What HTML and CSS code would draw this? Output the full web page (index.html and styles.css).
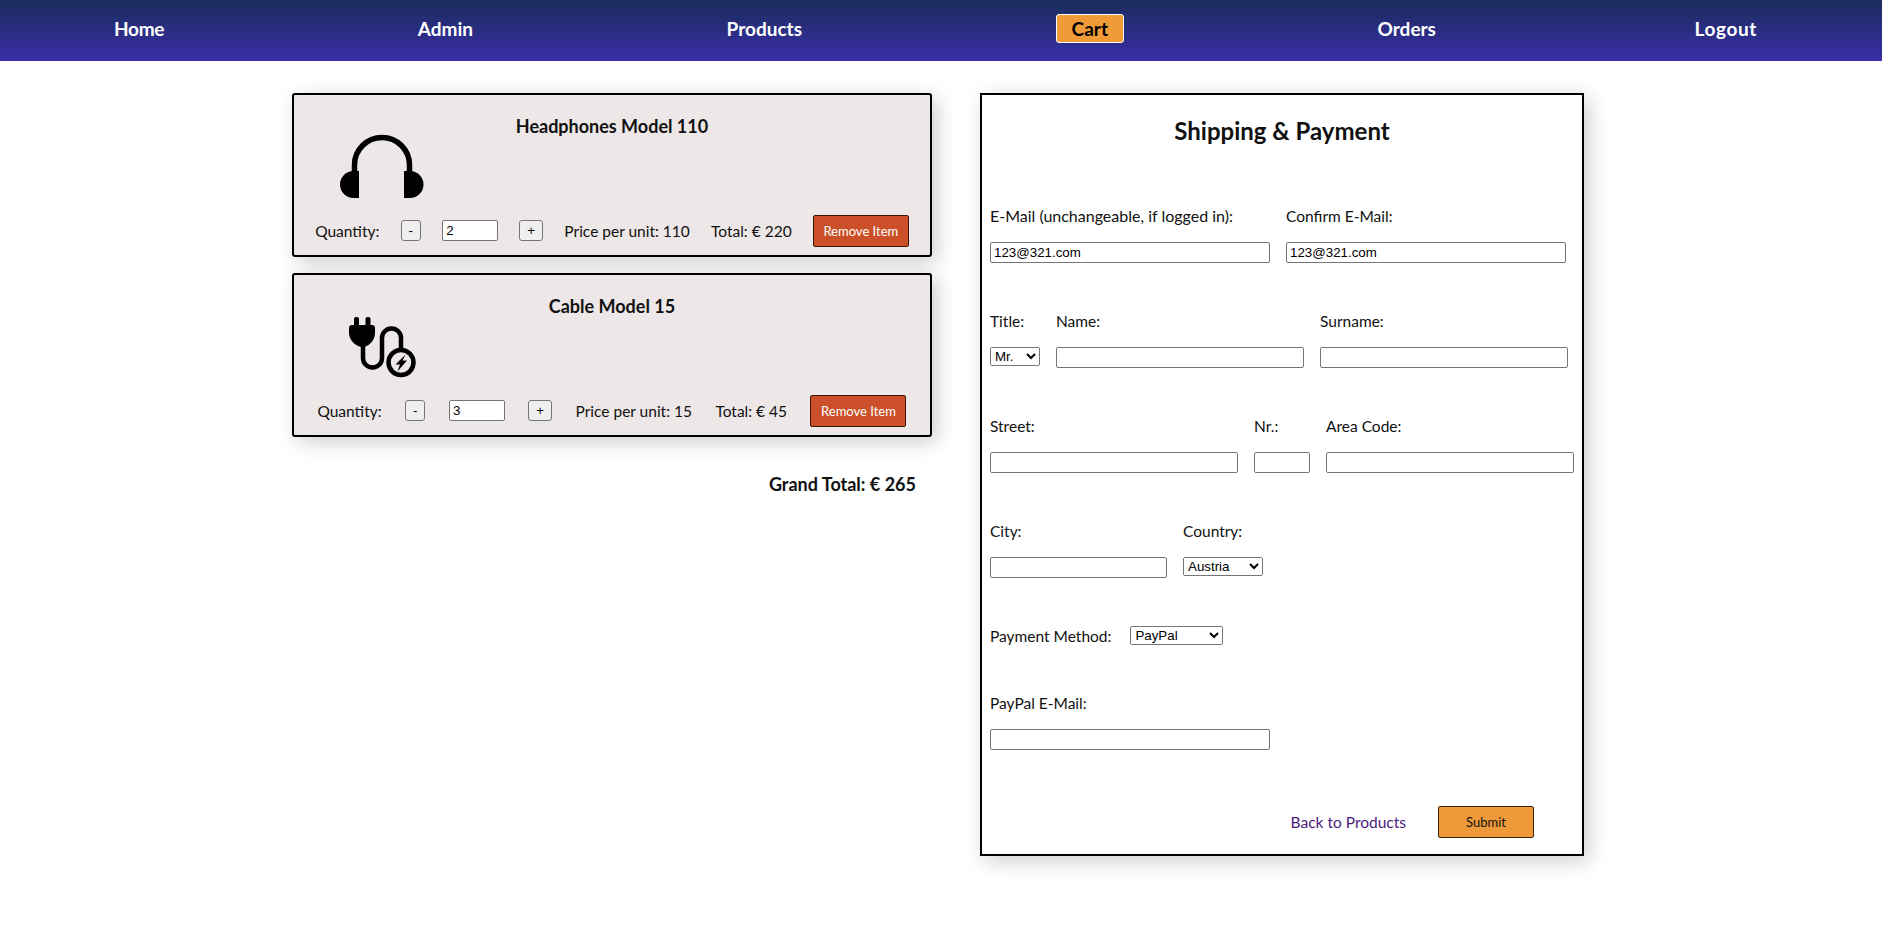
FILE: index.html
```html
<!DOCTYPE html>
<html lang="en">
<head>
    <meta charset="UTF-8">
    <meta name="viewport" content="width=device-width, initial-scale=1.0">
    <title>Cart</title>
    <link rel="stylesheet" href="styles.css">
</head>
<body>
    <nav class="topnav">
        <a href="#">Home</a>
        <a href="#">Admin</a>
        <a href="#">Products</a>
        <a href="#" class="active">Cart</a>
        <a href="#">Orders</a>
        <a href="#">Logout</a>
    </nav>
    <main class="page">
        <section class="cart">
            <article class="item">
                <div class="item-top">
                    <svg class="item-icon" viewBox="-8 -7 100 80" aria-hidden="true">
                        <path class="line thick" d="M16.5 42V33A27.5 27.5 0 0 1 71.5 33V42"/>
                        <path d="M21 39V66H15.5A13.5 13.5 0 0 1 15.5 39Z"/>
                        <path d="M66 39V66H72A13.5 13.5 0 0 0 72 39Z"/>
                    </svg>
                    <h3>Headphones Model 110</h3>
                </div>
                <div class="item-row">
                    <span>Quantity:</span>
                    <button type="button" class="qty">-</button>
                    <input type="text" class="qty-input" value="2">
                    <button type="button" class="qty">+</button>
                    <span>Price per unit: 110</span>
                    <span>Total: € 220</span>
                    <button type="button" class="remove">Remove Item</button>
                </div>
            </article>
            <article class="item">
                <div class="item-top">
                    <svg class="item-icon" viewBox="0 0 100 80" aria-hidden="true">
                        <rect x="24" y="12" width="5" height="10" rx="2"/>
                        <rect x="35.5" y="12" width="5" height="10" rx="2"/>
                        <path d="M22 20H42Q45 20 45 23V28C45 36 38 42 32.5 42C27 42 19 36 19 28V23Q19 20 22 20Z"/>
                        <path class="line" d="M33 40V53A9.5 9.5 0 0 0 52 53V33A9.5 9.5 0 0 1 71 33V46"/>
                        <circle class="line" cx="71" cy="57.5" r="12.5"/>
                        <polygon points="75.5,49.5 65.5,59.5 70,59.5 67.5,66.5 77,55.5 72.5,55.5"/>
                    </svg>
                    <h3>Cable Model 15</h3>
                </div>
                <div class="item-row">
                    <span>Quantity:</span>
                    <button type="button" class="qty">-</button>
                    <input type="text" class="qty-input" value="3">
                    <button type="button" class="qty">+</button>
                    <span>Price per unit: 15</span>
                    <span>Total: € 45</span>
                    <button type="button" class="remove">Remove Item</button>
                </div>
            </article>
            <p class="grand-total">Grand Total: € 265</p>
        </section>
        <form class="checkout">
            <h2>Shipping &amp; Payment</h2>
            <div class="form-row">
                <div class="field"><label class="long-label">E-Mail (unchangeable, if logged in):</label><input type="text" class="w-280" value="123@321.com"></div>
                <div class="field"><label>Confirm E-Mail:</label><input type="text" class="w-280" value="123@321.com"></div>
            </div>
            <div class="form-row">
                <div class="field"><label>Title:</label><select class="w-50"><option>Mr.</option><option>Ms.</option></select></div>
                <div class="field"><label>Name:</label><input type="text" class="w-248"></div>
                <div class="field"><label>Surname:</label><input type="text" class="w-248"></div>
            </div>
            <div class="form-row">
                <div class="field"><label>Street:</label><input type="text" class="w-248"></div>
                <div class="field"><label>Nr.:</label><input type="text" class="w-56"></div>
                <div class="field"><label>Area Code:</label><input type="text" class="w-248"></div>
            </div>
            <div class="form-row">
                <div class="field"><label>City:</label><input type="text" class="w-177"></div>
                <div class="field"><label>Country:</label><select class="w-80"><option>Austria</option><option>Germany</option></select></div>
            </div>
            <div class="form-row inline">
                <label>Payment Method:</label>
                <select class="w-93"><option>PayPal</option><option>Invoice</option></select>
            </div>
            <div class="form-row">
                <div class="field"><label>PayPal E-Mail:</label><input type="text" class="w-280"></div>
            </div>
            <div class="form-actions">
                <a href="#">Back to Products</a>
                <button type="submit" class="submit">Submit</button>
            </div>
        </form>
    </main>
</body>
</html>
```

FILE: styles.css
```css
body {
    font-family: 'Lato', 'Noto Sans', sans-serif;
    font-size: 15.5px;
    color: #111;
    background-color: #fff;
    margin: 0;
    padding: 0;
}

.topnav {
    box-sizing: border-box;
    display: flex;
    justify-content: space-between;
    align-items: center;
    height: 61px;
    padding: 0 125px 4px 114px;
    background: linear-gradient(#1a2d5c, #3a2ea8);
}

.topnav a {
    color: #fff;
    font-size: 19px;
    font-weight: bold;
    text-decoration: none;
}

.topnav a:first-child {
    letter-spacing: -0.3px;
}

.topnav a:last-child {
    letter-spacing: 0.6px;
    margin-left: 5px;
}

.topnav .active {
    background-color: #f09a38;
    color: #000;
    border: 1px solid #fff;
    border-radius: 3px;
    padding: 2px 15px;
}

.page {
    display: flex;
    align-items: flex-start;
    gap: 48px;
    padding: 32px 0 40px 292px;
}

.cart {
    width: 640px;
}

.item {
    box-sizing: border-box;
    height: 164px;
    margin-bottom: 16px;
    background-color: #ede7e7;
    border: 2px solid #000;
    border-radius: 3px;
    box-shadow: 5px 5px 20px rgba(0, 0, 0, 0.2);
}

.item-top {
    display: grid;
    grid-template-columns: 1fr auto 1fr;
    height: 120px;
}

.item-icon {
    display: block;
    width: 100px;
    height: 80px;
    margin: 30px 0 0 36px;
}

.item-icon .line {
    fill: none;
    stroke: #000;
    stroke-width: 4.5;
}

.item-icon .thick {
    stroke-width: 5.5;
}

h3 {
    margin: 19px 0 0;
    font-size: 18px;
    line-height: 24px;
}

.item-row {
    display: flex;
    justify-content: space-evenly;
    align-items: center;
    height: 32px;
    padding-bottom: 1px;
    box-sizing: border-box;
}

.qty {
    font-family: 'Liberation Sans', sans-serif;
    font-size: 13.33px;
    padding: 1px 7px;
    height: 21px;
    background-color: #efefef;
    border: 1px solid #767676;
    border-radius: 3px;
}

.qty-input {
    box-sizing: border-box;
    width: 56px;
}

.remove {
    font-family: inherit;
    font-size: 13px;
    width: 96px;
    height: 32px;
    margin-top: 1px;
    background-color: #cb4f28;
    color: #fff;
    border: 1px solid #3a1608;
    border-radius: 2px;
}

.grand-total {
    margin: 35px 16px 0 0;
    text-align: right;
    font-size: 18px;
    font-weight: bold;
    line-height: 24px;
}

.checkout {
    box-sizing: border-box;
    width: 604px;
    height: 763px;
    padding: 0 0 0 8px;
    background-color: #fff;
    border: 2px solid #000;
    box-shadow: 5px 5px 20px rgba(0, 0, 0, 0.2);
}

h2 {
    margin: 21px 8px 0 0;
    height: 90px;
    text-align: center;
    font-size: 24px;
    line-height: 30px;
}

.form-row {
    display: flex;
    align-items: flex-start;
    gap: 16px;
    margin-bottom: 48px;
}

.form-row.inline {
    align-items: center;
    gap: 19px;
}

.field label {
    display: block;
    height: 20px;
    line-height: 20px;
    margin-bottom: 16px;
}

.field .long-label {
    font-size: 16px;
}

input, select {
    display: block;
    box-sizing: border-box;
    font-family: 'Liberation Sans', sans-serif;
    font-size: 13.33px;
}

input {
    height: 21px;
    padding: 1px 3px;
    border: 1px solid #767676;
    border-radius: 2px;
}

select {
    height: 19px;
}

.w-50 { width: 50px; }
.w-56 { width: 56px; }
.w-80 { width: 80px; }
.w-93 { width: 93px; }
.w-177 { width: 177px; }
.w-248 { width: 248px; }
.w-280 { width: 280px; }

.form-actions {
    display: flex;
    justify-content: flex-end;
    align-items: center;
    gap: 32px;
    margin-top: 56px;
    padding-right: 48px;
}

.form-actions a {
    color: #4b1a7d;
    text-decoration: none;
}

.submit {
    font-family: inherit;
    font-size: 13px;
    width: 96px;
    height: 32px;
    background-color: #ef9a3a;
    color: #111;
    border: 1px solid #3a2408;
    border-radius: 2px;
}
```
